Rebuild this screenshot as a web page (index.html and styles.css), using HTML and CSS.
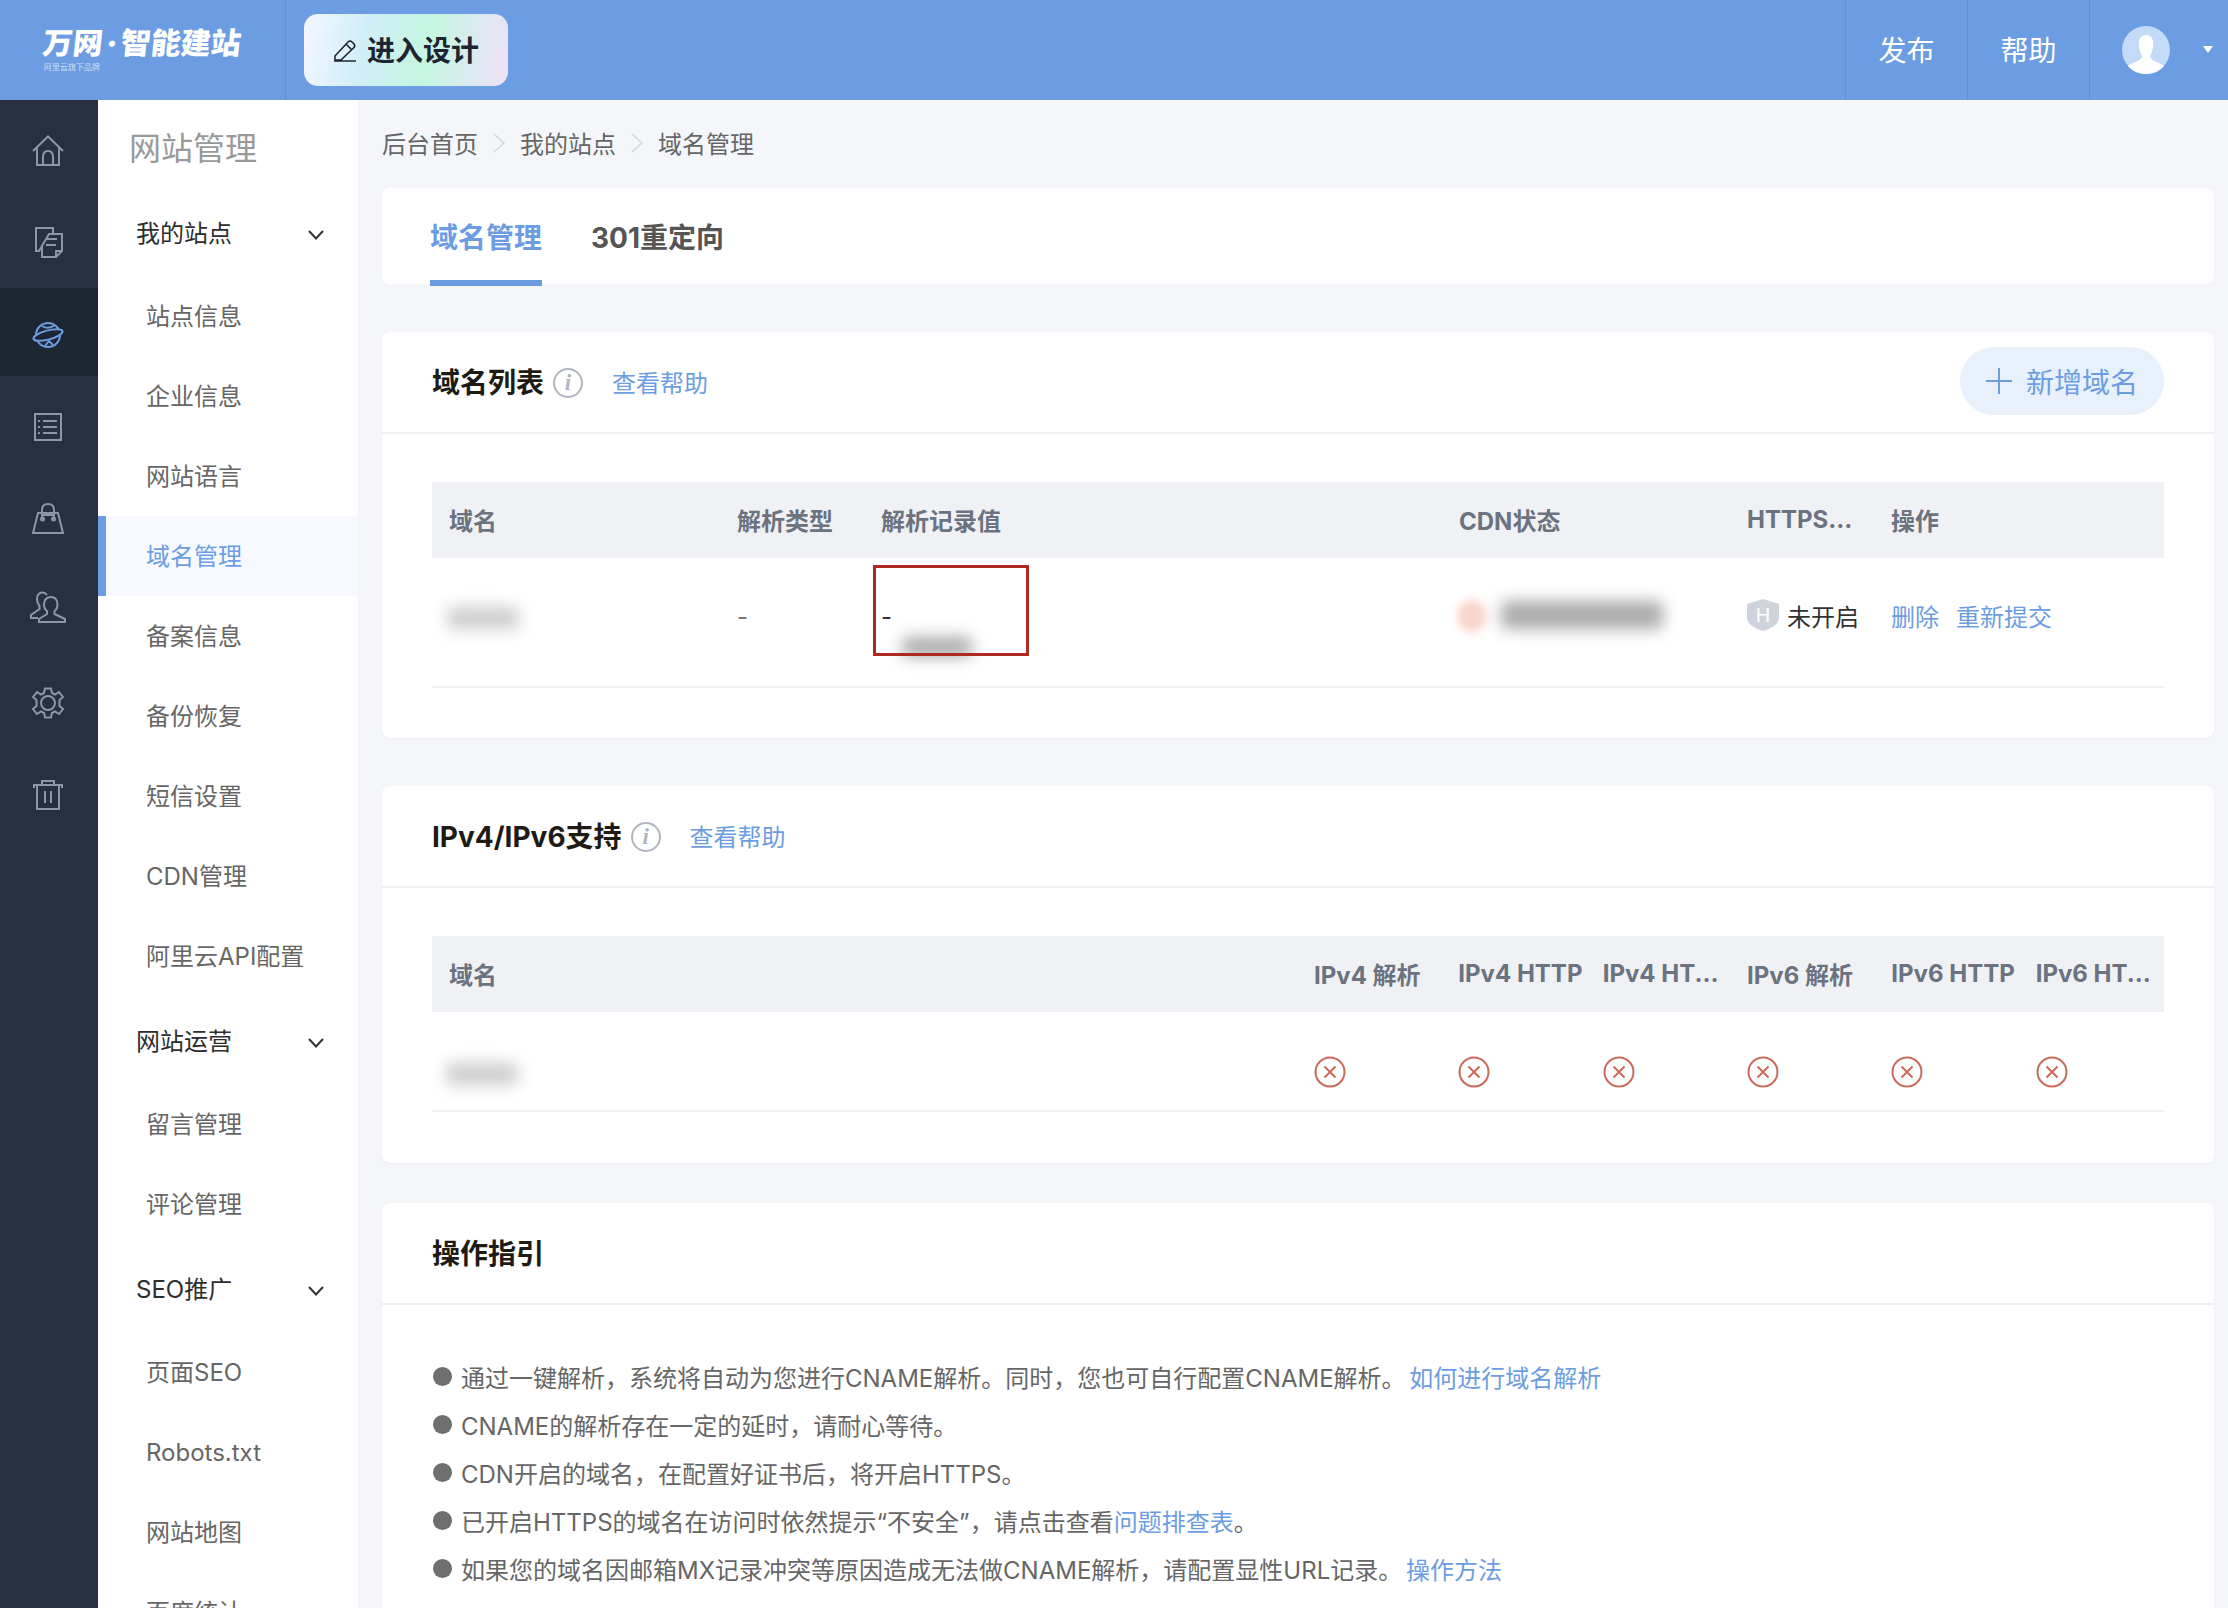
FILE: index.html
```html
<!DOCTYPE html>
<html lang="zh-CN">
<head>
    <meta charset="UTF-8">
    <title>域名管理</title>
    <link rel="stylesheet" href="styles.css">
</head>
<body>
    <header class="topbar">
        <div class="logo">
            <div class="logo-name">万网<span class="logo-dot">·</span>智能建站</div>
            <div class="logo-sub">阿里云旗下品牌</div>
        </div>
        <a class="design-btn">
            <svg class="pencil" viewBox="0 0 24 24" fill="none" stroke="#1e2530" stroke-width="1.6"><path d="M2 18 L15 4 Q17 2 19 4 L21 6 Q22.5 8 21 9.5 L8 22 H2 Z M13 6 L19 12 M1 23 H23"/></svg>
            进入设计
        </a>
        <div class="top-right">
            <a class="top-link">发布</a>
            <a class="top-link">帮助</a>
            <div class="user">
                <svg class="avatar" viewBox="0 0 48 48"><circle cx="24" cy="24" r="24" fill="#c3daf9"/><path d="M24 9 C30 9 32 14 31 21 C30.500 25 29 28 28 30 C28 33 32 35 37 37 Q41 39 42 40 C38 45 31 48 24 48 C17 48 10 45 6 40 Q8 38 11 37 C16 35 20 33 20 30 C19 28 17.500 25 17 21 C16 14 18 9 24 9 Z" fill="#fff"/></svg>
                <span class="caret"></span>
            </div>
        </div>
    </header>

    <div class="main">
        <nav class="rail">
            <a class="rail-item">
                <svg viewBox="0 0 32 32"><path d="M1 16 L16 1.500 L31 16 M5 13 V30 H27 V13 M11 30 V22 Q11 16 16 16 Q21 16 21 22 V30"/></svg>
            </a>
            <a class="rail-item">
                <svg viewBox="0 0 32 32"><path d="M21 6 V1 H4 V24 H7 L17 7 H30 V24 L24 30 H10 V19 M15 12 H25 M14 18 H24 M30 24 H24 V30"/></svg>
            </a>
            <a class="rail-item active">
                <svg viewBox="0 0 32 32"><circle cx="16" cy="16" r="12"/><path d="M10 7 Q16 11 23 6 M13 27 L17 22 L21 26"/><ellipse class="band" cx="16" cy="16" rx="15" ry="4.500" transform="rotate(-15 16 16)"/></svg>
            </a>
            <a class="rail-item">
                <svg viewBox="0 0 32 32"><rect x="3" y="3" width="26" height="26"/><path d="M11 10 H25 M11 16 H25 M11 22 H25 M6 10 H8 M6 16 H8 M6 22 H8"/></svg>
            </a>
            <a class="rail-item">
                <svg viewBox="0 1 32 32"><path d="M6 11 H26 L31 31 H1 Z M10 16 V8 Q10 2 16 2 Q22 2 22 8 V16 M10 13 H22"/><circle class="solid" cx="10.500" cy="17" r="2.500"/><circle class="solid" cx="21.500" cy="17" r="2.500"/></svg>
            </a>
            <a class="rail-item">
                <svg class="wide" viewBox="0 0 36 32"><path d="M17 4 Q15 1 11.500 1.500 Q7 2.500 7 8 Q7 12 9.500 15 V18 L1 24 V27 H8"/><path d="M21 6 Q27 6 27.500 13 Q27.500 18 24.500 20 V23 L35 28 V31 H9 V28 L17 23 V20 Q14 18 14 13 Q14.500 6 21 6 Z"/></svg>
            </a>
            <a class="rail-item">
                <svg viewBox="0 0 32 32"><path d="M13 1.500 H19 L20 6 L23 7.500 L27 5 L31 10 L27.500 13 V19 L31 22 L27 27 L23 24.500 L20 26 L19 30.500 H13 L12 26 L9 24.500 L5 27 L1 22 L4.500 19 V13 L1 10 L5 5 L9 7.500 L12 6 Z"/><circle cx="16" cy="16" r="7"/></svg>
            </a>
            <a class="rail-item">
                <svg viewBox="0 0 32 32"><path d="M2 9 V6 H30 V9 M10 6 V2 H22 V6 M5 6 V30 H27 V6 M13 12 V24 M19 12 V24"/></svg>
            </a>
        </nav>

        <aside class="side">
            <div class="side-title">网站管理</div>
            <div class="side-group">我的站点<svg class="chev" viewBox="0 0 16 10"><path d="M1 1 L8 8.500 L15 1"/></svg></div>
            <a class="side-item">站点信息</a>
            <a class="side-item">企业信息</a>
            <a class="side-item">网站语言</a>
            <a class="side-item active">域名管理</a>
            <a class="side-item">备案信息</a>
            <a class="side-item">备份恢复</a>
            <a class="side-item">短信设置</a>
            <a class="side-item">CDN管理</a>
            <a class="side-item">阿里云API配置</a>
            <div class="side-group">网站运营<svg class="chev" viewBox="0 0 16 10"><path d="M1 1 L8 8.500 L15 1"/></svg></div>
            <a class="side-item">留言管理</a>
            <a class="side-item">评论管理</a>
            <div class="side-group">SEO推广<svg class="chev" viewBox="0 0 16 10"><path d="M1 1 L8 8.500 L15 1"/></svg></div>
            <a class="side-item">页面SEO</a>
            <a class="side-item">Robots.txt</a>
            <a class="side-item">网站地图</a>
            <a class="side-item">百度统计</a>
        </aside>

        <section class="content">
            <div class="crumbs">
                <a>后台首页</a>
                <svg class="crumb-sep" viewBox="0 0 12 20"><path d="M1 1 L11 10 L1 19"/></svg>
                <a>我的站点</a>
                <svg class="crumb-sep" viewBox="0 0 12 20"><path d="M1 1 L11 10 L1 19"/></svg>
                <a>域名管理</a>
            </div>

            <div class="tabs">
                <a class="tab active">域名管理</a>
                <a class="tab">301重定向</a>
            </div>

            <div class="card card-domains">
                <div class="card-head">
                    <h2>域名列表</h2>
                    <span class="info">i</span>
                    <a class="help">查看帮助</a>
                    <a class="add-btn"><svg viewBox="0 0 26 26"><path d="M13 0 V26 M0 13 H26"/></svg>新增域名</a>
                </div>
                <div class="table-wrap">
                    <div class="domain-table">
                        <div class="th">域名</div>
                        <div class="th">解析类型</div>
                        <div class="th">解析记录值</div>
                        <div class="th">CDN状态</div>
                        <div class="th">HTTPS...</div>
                        <div class="th">操作</div>
                        <div class="td"><span class="smudge smudge-domain"></span></div>
                        <div class="td muted">-</div>
                        <div class="td record">-<span class="smudge smudge-record"></span></div>
                        <div class="td"><span class="cdn-dot"></span><span class="smudge smudge-cdn"></span></div>
                        <div class="td https">
                            <svg class="shield" viewBox="0 0 32 32"><path d="M16 0 L32 5 V20 Q30 28 16 32 Q2 28 0 20 V5 Z" fill="#cfd4dc"/><text x="16" y="23" text-anchor="middle" fill="#fff">H</text></svg>
                            未开启
                        </div>
                        <div class="td ops"><a>删除</a><a>重新提交</a></div>
                        <div class="row-line"></div>
                    </div>
                    <div class="red-box"></div>
                </div>
            </div>

            <div class="card card-ip">
                <div class="card-head">
                    <h2>IPv4/IPv6支持</h2>
                    <span class="info">i</span>
                    <a class="help">查看帮助</a>
                </div>
                <div class="table-wrap">
                    <div class="ip-table">
                        <div class="th">域名</div>
                        <div class="th">IPv4 解析</div>
                        <div class="th">IPv4 HTTP</div>
                        <div class="th">IPv4 HT...</div>
                        <div class="th">IPv6 解析</div>
                        <div class="th">IPv6 HTTP</div>
                        <div class="th">IPv6 HT...</div>
                        <div class="td"><span class="smudge smudge-domain"></span></div>
                        <div class="td"><svg class="no" viewBox="0 0 32 32"><circle cx="16" cy="16" r="14.500"/><path d="M10.500 10.500 L21.500 21.500 M21.500 10.500 L10.500 21.500"/></svg></div>
                        <div class="td"><svg class="no" viewBox="0 0 32 32"><circle cx="16" cy="16" r="14.500"/><path d="M10.500 10.500 L21.500 21.500 M21.500 10.500 L10.500 21.500"/></svg></div>
                        <div class="td"><svg class="no" viewBox="0 0 32 32"><circle cx="16" cy="16" r="14.500"/><path d="M10.500 10.500 L21.500 21.500 M21.500 10.500 L10.500 21.500"/></svg></div>
                        <div class="td"><svg class="no" viewBox="0 0 32 32"><circle cx="16" cy="16" r="14.500"/><path d="M10.500 10.500 L21.500 21.500 M21.500 10.500 L10.500 21.500"/></svg></div>
                        <div class="td"><svg class="no" viewBox="0 0 32 32"><circle cx="16" cy="16" r="14.500"/><path d="M10.500 10.500 L21.500 21.500 M21.500 10.500 L10.500 21.500"/></svg></div>
                        <div class="td"><svg class="no" viewBox="0 0 32 32"><circle cx="16" cy="16" r="14.500"/><path d="M10.500 10.500 L21.500 21.500 M21.500 10.500 L10.500 21.500"/></svg></div>
                        <div class="row-line"></div>
                    </div>
                </div>
            </div>

            <div class="card card-guide">
                <div class="card-head">
                    <h2>操作指引</h2>
                </div>
                <ul class="guide">
                    <li><span>通过一键解析，系统将自动为您进行CNAME解析。同时，您也可自行配置CNAME解析。 <a class="tail-link">如何进行域名解析</a></span></li>
                    <li><span>CNAME的解析存在一定的延时，请耐心等待。</span></li>
                    <li><span>CDN开启的域名，在配置好证书后，将开启HTTPS。</span></li>
                    <li><span>已开启HTTPS的域名在访问时依然提示“不安全”，请点击查看<a>问题排查表</a>。</span></li>
                    <li><span>如果您的域名因邮箱MX记录冲突等原因造成无法做CNAME解析，请配置显性URL记录。 <a class="tail-link">操作方法</a></span></li>
                </ul>
            </div>
        </section>
    </div>
</body>
</html>
```

FILE: styles.css
```css
* {
    box-sizing: border-box;
}
body {
    margin: 0;
    width: 2228px;
    height: 1608px;
    overflow: hidden;
    font-family: Inter, "Noto Sans CJK SC", sans-serif;
    font-size: 24px;
    background: #f4f6fa;
    color: #666;
}
a {
    color: inherit;
    text-decoration: none;
}

/* top bar */
.topbar {
    height: 100px;
    background: #6c9de2;
    display: flex;
    align-items: center;
}
.logo {
    width: 286px;
    height: 100px;
    padding: 24px 0 0 41px;
    border-right: 1px solid #5f90d6;
    color: #fff;
}
.logo-name {
    font-size: 30px;
    font-weight: 900;
    line-height: 38px;
    white-space: nowrap;
    transform: skewX(-6deg);
    transform-origin: left bottom;
}
.logo-dot {
    display: inline-block;
    width: 18px;
    text-align: center;
}
.logo-sub {
    font-size: 8px;
    line-height: 10px;
    margin-left: 3px;
    opacity: 0.65;
}
.design-btn {
    margin-left: 18px;
    width: 204px;
    height: 72px;
    border-radius: 14px;
    background: linear-gradient(100deg, #f5f6fe 0%, #d0eef8 30%, #c5f6e0 60%, #dceaf0 82%, #efe0f6 100%);
    display: flex;
    align-items: center;
    justify-content: center;
    gap: 10px;
    padding-bottom: 2px;
    font-size: 28px;
    font-weight: 600;
    color: #1e2530;
}
.pencil {
    width: 24px;
    height: 24px;
    margin-top: 2px;
}
.top-right {
    margin-left: auto;
    display: flex;
    height: 100px;
}
.top-link {
    width: 122px;
    padding-bottom: 2px;
    border-left: 1px solid #5f90d6;
    display: flex;
    align-items: center;
    justify-content: center;
    font-size: 28px;
    color: #fff;
}
.user {
    width: 139px;
    border-left: 1px solid #5f90d6;
    padding-left: 32px;
    display: flex;
    align-items: center;
}
.avatar {
    width: 48px;
    height: 48px;
}
.caret {
    margin-left: 33px;
    margin-top: -2px;
    border-left: 5px solid transparent;
    border-right: 5px solid transparent;
    border-top: 7px solid #fff;
}

.main {
    display: flex;
    height: 1508px;
}

/* icon rail */
.rail {
    width: 98px;
    flex: none;
    background: #28303f;
    padding-top: 4px;
}
.rail-item {
    height: 88px;
    margin-bottom: 4px;
    padding: 6px 2px 0 0;
    display: flex;
    align-items: center;
    justify-content: center;
}
.rail-item svg {
    width: 32px;
    height: 32px;
    fill: none;
    stroke: #8e95a5;
    stroke-width: 2;
}
.rail-item svg.wide {
    width: 36px;
    margin-bottom: 8px;
}
.rail-item .solid {
    fill: #8e95a5;
    stroke: none;
}
.rail-item.active {
    background: #1f2633;
}
.rail-item.active svg {
    stroke: #6c9de2;
}
.rail-item .band {
    fill: #1f2633;
}

/* side menu */
.side {
    width: 260px;
    flex: none;
    background: #fff;
    overflow: hidden;
}
.side-title {
    height: 88px;
    padding-left: 31px;
    line-height: 98px;
    font-size: 32px;
    color: #999;
}
.side-group {
    height: 88px;
    padding: 0 34px 2px 38px;
    display: flex;
    align-items: center;
    justify-content: space-between;
    color: #2d2d2d;
}
.chev {
    width: 16px;
    height: 10px;
    margin-top: 8px;
    fill: none;
    stroke: #333;
    stroke-width: 2;
}
.side-item {
    display: block;
    height: 80px;
    line-height: 82px;
    padding-left: 48px;
    white-space: nowrap;
}
.side-item.active {
    background: #f7f9fe;
    border-left: 8px solid #6c9de2;
    padding-left: 40px;
    color: #6c9de2;
}

/* content */
.content {
    flex: 1;
    padding: 0 14px 0 24px;
    overflow: hidden;
}
.crumbs {
    height: 88px;
    padding-bottom: 3px;
    display: flex;
    align-items: center;
    gap: 15px;
}
.crumb-sep {
    width: 12px;
    height: 20px;
    fill: none;
    stroke: #d2d4d8;
    stroke-width: 1.5;
}
.tabs {
    height: 96px;
    background: #fff;
    border-radius: 8px;
    padding-left: 48px;
    display: flex;
    gap: 49px;
}
.tab {
    height: 98px;
    line-height: 100px;
    font-size: 28px;
    font-weight: 700;
    color: #555;
}
.tab.active {
    color: #6c9de2;
    border-bottom: 6px solid #6c9de2;
}
.card {
    background: #fff;
    border-radius: 8px;
    box-shadow: 0 1px 2px rgba(0, 0, 0, 0.04);
}
.card-domains {
    margin-top: 48px;
    height: 406px;
}
.card-ip {
    margin-top: 48px;
    height: 377px;
}
.card-guide {
    margin-top: 40px;
    height: 500px;
}
.card-head {
    height: 102px;
    padding: 0 50px 2px 50px;
    border-bottom: 2px solid #eef0f4;
    display: flex;
    align-items: center;
}
.card-head h2 {
    margin: 0;
    font-size: 28px;
    font-weight: 700;
    color: #1e1a14;
}
.info {
    width: 30px;
    height: 30px;
    margin: 4px 0 0 9px;
    border: 2px solid #b0b5bf;
    border-radius: 50%;
    text-align: center;
    line-height: 26px;
    font-family: "Liberation Serif", serif;
    font-size: 23px;
    font-style: italic;
    font-weight: 700;
    color: #b0b5bf;
}
.help {
    margin-left: 29px;
    color: #6c9de2;
}
.add-btn {
    margin-left: auto;
    width: 204px;
    height: 68px;
    border-radius: 34px;
    background: #e8f0fc;
    display: flex;
    align-items: center;
    justify-content: center;
    gap: 14px;
    font-size: 28px;
    color: #6c9de2;
}
.add-btn svg {
    width: 26px;
    height: 26px;
    fill: none;
    stroke: #6c9de2;
    stroke-width: 2;
}
.table-wrap {
    position: relative;
    margin: 48px 50px 0;
}
.domain-table {
    display: grid;
    grid-template-columns: 288px 144px 578px 288px 144px 290px;
    grid-template-rows: 76px 128px 2px;
}
.ip-table {
    display: grid;
    grid-template-columns: 866px repeat(6, 144.33px);
    grid-template-rows: 76px 98px 2px;
}
.th {
    background: #eff1f5;
    padding: 0 0 2px 17px;
    display: flex;
    align-items: center;
    font-weight: 700;
    color: #6b7280;
    white-space: nowrap;
}
.ip-table .th {
    padding-left: 16px;
}
.ip-table .th:first-child {
    padding-left: 17px;
}
.td {
    padding-left: 17px;
    display: flex;
    align-items: center;
    color: #333;
    white-space: nowrap;
}
.ip-table .td {
    padding: 22px 0 0 16px;
}
.domain-table .td {
    padding-bottom: 12px;
}
.domain-table .https,
.domain-table .ops {
    padding-bottom: 14px;
}
.td.muted {
    color: #777;
}
.row-line {
    grid-column: 1 / -1;
    background: #eff1f4;
}
.smudge {
    display: block;
    background: #bcbcbc;
    border-radius: 6px;
    filter: blur(8px);
}
.smudge-domain {
    width: 72px;
    height: 22px;
    margin-left: -2px;
    margin-top: 4px;
    opacity: 0.75;
}
.smudge-record {
    position: absolute;
    left: 470px;
    top: 155px;
    width: 70px;
    height: 20px;
    background: #aaa;
}
.smudge-cdn {
    width: 162px;
    height: 28px;
    margin-left: 14px;
    margin-top: -2px;
    background: #aaa;
}
.cdn-dot {
    width: 30px;
    height: 32px;
    margin-left: -2px;
    border-radius: 50%;
    background: #f9d5cd;
    filter: blur(4px);
}
.https {
    gap: 8px;
}
.shield {
    width: 32px;
    height: 32px;
    font-size: 20px;
    font-family: "Liberation Sans", sans-serif;
}
.ops {
    gap: 17px;
    color: #6c9de2;
}
.red-box {
    position: absolute;
    left: 441px;
    top: 83px;
    width: 156px;
    height: 91px;
    border: 3px solid #ad2a20;
}
.no {
    width: 32px;
    height: 32px;
    fill: none;
    stroke: #cb6a5b;
    stroke-width: 2;
}
.guide {
    list-style: none;
    margin: 47px 0 0;
    padding: 0 0 0 51px;
}
.guide li {
    height: 48px;
    display: flex;
    align-items: center;
    gap: 9px;
    color: #666;
    white-space: nowrap;
}
.guide li::before {
    content: "";
    width: 19px;
    height: 19px;
    border-radius: 50%;
    background: #6e6e6e;
}
.guide a {
    color: #6c9de2;
}
.guide a.tail-link {
    margin-left: -3px;
}
```
